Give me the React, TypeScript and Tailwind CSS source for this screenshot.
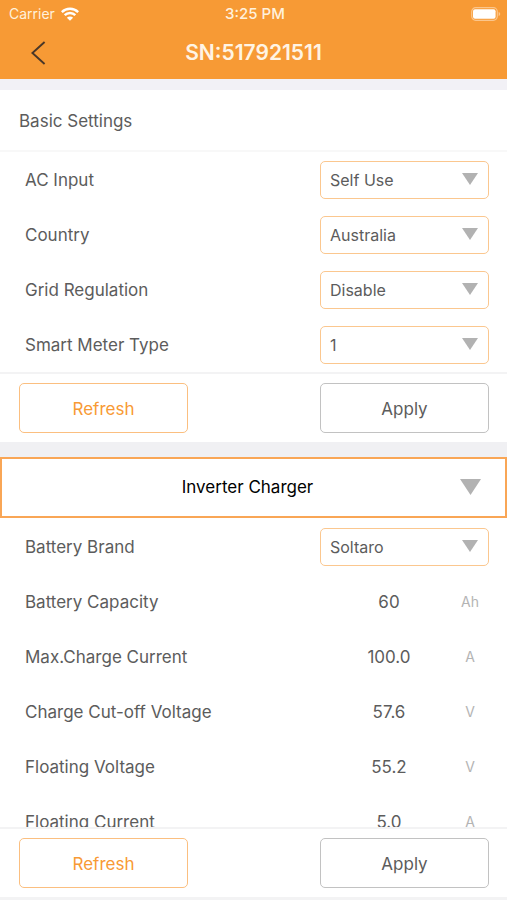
import React from 'react';

const basicSettings = [
  { id: 'ac-input', label: 'AC Input', value: 'Self Use' },
  { id: 'country', label: 'Country', value: 'Australia' },
  { id: 'grid-regulation', label: 'Grid Regulation', value: 'Disable' },
  { id: 'smart-meter-type', label: 'Smart Meter Type', value: '1' },
];

const chargerValues = [
  { id: 'battery-capacity', label: 'Battery Capacity', value: '60', unit: 'Ah' },
  { id: 'max-charge-current', label: 'Max.Charge Current', value: '100.0', unit: 'A' },
  { id: 'cutoff-voltage', label: 'Charge Cut-off Voltage', value: '57.6', unit: 'V' },
  { id: 'floating-voltage', label: 'Floating Voltage', value: '55.2', unit: 'V' },
  { id: 'floating-current', label: 'Floating Current', value: '5.0', unit: 'A' },
];

const Triangle = ({ className }: { className: string }) => (
  <svg viewBox="0 0 16 12" preserveAspectRatio="none" className={className} aria-hidden="true">
    <path d="M0 0h16L8 12z" fill="#b2b2b2" />
  </svg>
);

const SelectRow = ({ id, label, value }: { id: string; label: string; value: string }) => (
  <div className="flex h-[55px] items-center justify-between pl-[25px] pr-[18px]">
    <label htmlFor={id} className="pt-[3px]">{label}</label>
    <div className="relative w-[169px]">
      <select
        id={id}
        defaultValue={value}
        className="block h-[38px] w-full appearance-none rounded-[5px] border border-[#fbc78f] bg-white px-[9px] text-base text-[#5c5c5c] outline-none"
      >
        <option>{value}</option>
      </select>
      <Triangle className="pointer-events-none absolute right-[11px] top-3 h-3 w-4" />
    </div>
  </div>
);

const ValueRow = ({ id, label, value, unit }: { id: string; label: string; value: string; unit: string }) => (
  <div className="flex h-[55px] items-center justify-between pl-[25px] pr-[18px]">
    <label htmlFor={id} className="pt-[3px]">{label}</label>
    <div className="flex w-[169px] items-center pr-[7px]">
      <input id={id} defaultValue={value} className="w-full min-w-0 flex-1 bg-transparent pt-[3px] text-center outline-none" />
      <span className="w-6 text-center text-sm text-[#b4b4b4]">{unit}</span>
    </div>
  </div>
);

const ActionButtons = () => (
  <div className="flex justify-between py-[9px] pl-[19px] pr-[18px]">
    <button className="h-[50px] w-[169px] rounded-[5px] border border-[#fbbf80] pt-[3px] text-[#f89a35]">Refresh</button>
    <button className="h-[50px] w-[169px] rounded-[5px] border border-[#c2c2c2] pt-[3px]">Apply</button>
  </div>
);

const Header = () => (
  <header className="shrink-0 bg-[#f79a35] text-white">
    <div className="grid h-[27px] grid-cols-3 items-center pl-[9px] pr-[6px] text-sm">
      <div className="flex items-center gap-[6px] text-[#fff1dc]">
        <span>Carrier</span>
        <svg viewBox="0 0 18 14" className="h-[14px] w-[18px]" fill="none" stroke="#fff" strokeWidth="2.5" aria-hidden="true">
          <path d="M.8 5.100a11.600 11.600 0 0 1 16.400 0" />
          <path d="M3.700 8.200a7.500 7.500 0 0 1 10.600 0" />
          <path d="M9 13.800 5.900 10.700a4.400 4.400 0 0 1 6.200 0z" fill="#fff" stroke="none" />
        </svg>
      </div>
      <span className="text-center text-[15px] font-medium text-[#fff1dc]">3:25 PM</span>
      <svg viewBox="0 0 30 14" className="h-[14px] w-[30px] justify-self-end" aria-hidden="true">
        <rect x=".7" y=".7" width="25.6" height="12.6" rx="4" fill="none" stroke="#fbc68c" strokeWidth="1.2" />
        <rect x="2" y="2.200" width="22.600" height="9.600" rx="2" fill="#fff" />
        <path d="M27.600 5v4c1-.3 1.600-1 1.600-2s-.6-1.700-1.600-2z" fill="#fbc68c" />
      </svg>
    </div>
    <div className="grid h-[52px] grid-cols-[64px_1fr_64px] items-center">
      <button aria-label="Back" className="pl-[31px]">
        <svg viewBox="0 0 15 24" className="h-6 w-[15px]" fill="none" stroke="#4a3728" strokeWidth="1.9" aria-hidden="true">
          <path d="M13.600 1 1.400 12l12.200 11" />
        </svg>
      </button>
      <h1 className="text-center text-[21px] font-semibold text-[#fff4e4]">SN:517921511</h1>
    </div>
  </header>
);

const App = () => {
  return (
    <div className="flex h-screen flex-col bg-white font-['Inter',sans-serif] text-[17px] text-[#5c5c5c]">
      <Header />

      <section className="shrink-0 border-t-[11px] border-[#f2f1f6]">
        <h2 className="flex h-[62px] items-center border-b-2 border-[#f8f8f8] pl-[19px] pt-[3px]">Basic Settings</h2>
        <div className="border-b-2 border-[#f3f3f4]">
          {basicSettings.map((item) => (
            <SelectRow key={item.id} {...item} />
          ))}
        </div>
        <ActionButtons />
      </section>

      <section className="flex min-h-0 flex-1 flex-col border-t-[15px] border-[#f0f0f3]">
        <div className="relative shrink-0">
          <select
            aria-label="Device"
            defaultValue="Inverter Charger"
            className="block h-[61px] w-full appearance-none border-2 border-[#f9a656] bg-white pr-3 text-center text-black outline-none [text-align-last:center]"
          >
            <option>Inverter Charger</option>
          </select>
          <Triangle className="pointer-events-none absolute right-[26px] top-[22px] h-4 w-[21px]" />
        </div>
        <div className="min-h-0 flex-1 overflow-y-auto pt-px [scrollbar-width:none]">
          <SelectRow id="battery-brand" label="Battery Brand" value="Soltaro" />
          {chargerValues.map((item) => (
            <ValueRow key={item.id} {...item} />
          ))}
        </div>
        <div className="shrink-0 border-b-[3px] border-t-2 border-[#f3f3f4]">
          <ActionButtons />
        </div>
      </section>
    </div>
  );
};

export default App;
